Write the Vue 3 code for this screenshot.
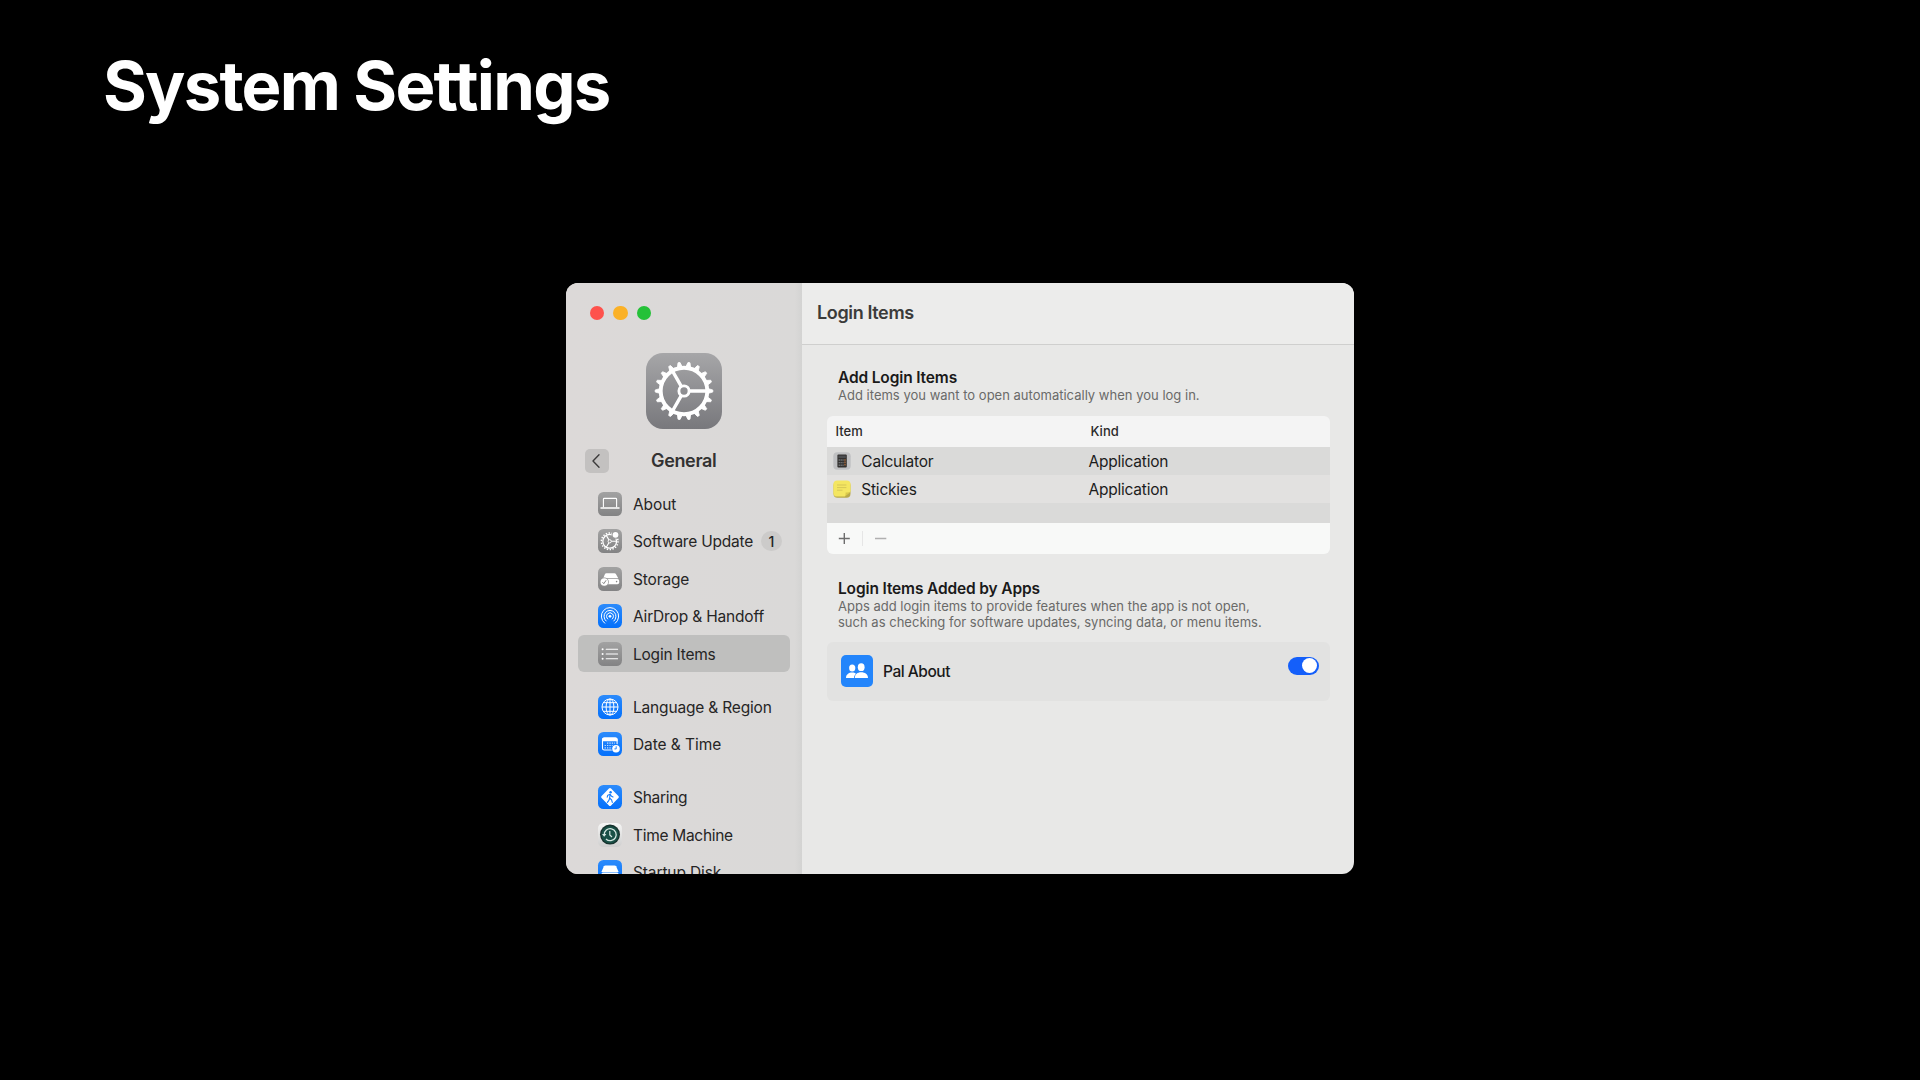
<script setup>
const groups = [
  [
    { label: 'About', icon: 'about', tone: 'gray', track: -0.1 },
    { label: 'Software Update', icon: 'update', tone: 'gray', badge: 1, track: -0.21 },
    { label: 'Storage', icon: 'storage', tone: 'gray', track: -0.15 },
    { label: 'AirDrop & Handoff', icon: 'airdrop', tone: 'blue', track: -0.17 },
    { label: 'Login Items', icon: 'list', tone: 'gray', active: true, track: -0.22 },
  ],
  [
    { label: 'Language & Region', icon: 'globe', tone: 'blue', track: -0.18 },
    { label: 'Date & Time', icon: 'date', tone: 'blue', track: -0.07 },
  ],
  [
    { label: 'Sharing', icon: 'sharing', tone: 'blue', track: -0.28 },
    { label: 'Time Machine', icon: 'machine', tone: 'white', track: -0.3 },
    { label: 'Startup Disk', icon: 'disk', tone: 'blue', track: -0.12 },
  ],
]
const rows = [
  { name: 'Calculator', kind: 'Application', icon: 'calc' },
  { name: 'Stickies', kind: 'Application', icon: 'note' },
]
const teeth = Array.from({ length: 18 }, (_, i) => i * 20)
</script>

<template>
  <main class="stage">
    <h1 class="title">System Settings</h1>

    <section class="window">
      <aside class="sidebar">
        <div class="lights">
          <i class="light red"></i><i class="light amber"></i><i class="light green"></i>
        </div>
        <div class="hero">
          <svg viewBox="0 0 76 76" width="76" height="76">
            <g fill="none" stroke="#fff" transform="translate(38 38)">
              <circle r="23.3" stroke-width="3.9" />
              <circle r="5.1" stroke-width="2.9" />
              <path d="M6 0H23M-3 -5.2L-11.5 -20M-3 5.2L-11.5 20" stroke-width="3.4" />
              <path v-for="a in teeth" :key="a" d="M24.5 -2.3L28.8 -1V1L24.5 2.3Z" fill="#fff" stroke-width=".8" stroke-linejoin="round" :transform="`rotate(${a})`" />
            </g>
          </svg>
        </div>
        <div class="nav-head">
          <button class="back">
            <svg viewBox="0 0 24 24" width="24" height="24"><path d="M14 5.8L8 12L14 18.2" fill="none" stroke="#3c3b3b" stroke-width="1.4" stroke-linecap="round" stroke-linejoin="round" /></svg>
          </button>
          <span>General</span>
        </div>

        <nav class="nav">
          <ul v-for="(group, g) in groups" :key="g" class="group">
            <li v-for="item in group" :key="item.label" class="item" :class="{ active: item.active }">
              <span class="icon" :class="item.tone">
                <svg viewBox="0 0 24 24" width="24" height="24">
                  <g v-if="item.icon === 'about'" fill="none" stroke="#fff">
                    <path d="M5.4 15.2V7.3Q5.4 6.4 6.3 6.4H17.7Q18.6 6.4 18.6 7.3V15.2" stroke-width="1.1" />
                    <path d="M3 16H21" stroke-width="1.5" stroke-linecap="round" />
                  </g>
                  <g v-else-if="item.icon === 'update'" fill="none" stroke="#fff">
                    <circle cx="11.7" cy="12.3" r="6.9" stroke-width="1.3" />
                    <circle cx="11.7" cy="12.3" r="8.3" stroke-width="1.5" stroke-dasharray="1.45 1.45" />
                    <circle cx="11.7" cy="12.3" r="1.6" stroke-width="1" />
                    <path d="M13.3 12.3H18.5M10.9 10.9L8.3 6.4M10.9 13.7L8.3 18.2" stroke-width="1.1" />
                    <circle cx="17.3" cy="6" r="3.7" fill="#999" stroke="none" />
                    <circle cx="17.5" cy="5.8" r="2.9" fill="#fff" stroke="none" />
                  </g>
                  <g v-else-if="item.icon === 'storage'">
                    <path d="M8.3 6.2H16.5Q17.4 6.2 17.9 7L20.3 11.3H5.2L7 7Q7.4 6.2 8.3 6.2Z" fill="#fff" />
                    <rect x="4.6" y="11.9" width="16.6" height="5.3" rx="1.8" fill="#fff" />
                    <circle cx="18.6" cy="14.6" r=".8" fill="#888" />
                    <circle cx="6.3" cy="15" r="4.5" fill="#929292" />
                    <circle cx="6.3" cy="15" r="3.8" fill="#fff" />
                    <path d="M4.5 15.2L5.8 16.7L8.1 13.3" fill="none" stroke="#888" stroke-width="1" />
                  </g>
                  <g v-else-if="item.icon === 'airdrop'" fill="none" stroke="#fff" stroke-width="1" stroke-linecap="round">
                    <circle cx="12" cy="12.3" r="1.4" fill="#fff" stroke="none" />
                    <path d="M9.7 15A3.5 3.5 0 1 1 14.3 15" />
                    <path d="M8.1 17A6 6 0 1 1 15.9 17" />
                    <path d="M6.7 19.2A8.7 8.7 0 1 1 17.3 19.2" />
                  </g>
                  <g v-else-if="item.icon === 'list'" fill="none" stroke="#fff" stroke-linecap="round">
                    <path d="M8.2 7.2H19.6M8.2 12H19.6M8.2 16.8H19.6" stroke-width="1.1" />
                    <path d="M4.6 7.2H4.61M4.6 12H4.61M4.6 16.8H4.61" stroke-width="2" />
                  </g>
                  <g v-else-if="item.icon === 'globe'" fill="none" stroke="#fff" stroke-width="1">
                    <circle cx="12" cy="12" r="8" />
                    <ellipse cx="12" cy="12" rx="3.9" ry="8" />
                    <path d="M12 4V20M4 12H20M5.4 7.7H18.6M5.4 16.3H18.6" />
                  </g>
                  <g v-else-if="item.icon === 'date'">
                    <rect x="4.5" y="6" width="14.6" height="12" rx="1.8" fill="none" stroke="#fff" stroke-width="1.1" />
                    <path d="M4 9.2V7.4Q4 5.5 6 5.5H17.6Q19.6 5.5 19.6 7.4V9.2Z" fill="#fff" />
                    <path d="M9 11.2H17M6.6 13.5H17M6.6 15.8H14" stroke="#fff" stroke-opacity=".75" stroke-width="1.2" stroke-dasharray="1.3 1.1" />
                    <circle cx="18" cy="16.7" r="4.6" fill="#137bfb" />
                    <circle cx="18" cy="16.7" r="3.8" fill="#fff" />
                    <path d="M18.2 14.3V16.9H16.4" fill="none" stroke="#137bfb" stroke-width=".9" />
                  </g>
                  <g v-else-if="item.icon === 'sharing'">
                    <rect x="5.3" y="5.3" width="13.4" height="13.4" rx="1.5" fill="#fff" transform="rotate(45 12 12)" />
                    <circle cx="12.6" cy="7.2" r="1.2" fill="#147cfc" />
                    <path d="M12.2 9.2L11.6 13L13.6 14.8L14.3 17.4M11.5 13.4L10.9 15.4L9.4 17.3M9.2 12.2L9.8 10.2L12.2 9.3L13.5 11.2L15 11.9" fill="none" stroke="#147cfc" stroke-width="1.1" stroke-linecap="round" stroke-linejoin="round" />
                  </g>
                  <g v-else-if="item.icon === 'machine'">
                    <circle cx="12" cy="11.6" r="10" fill="#17332e" />
                    <circle cx="12" cy="11.6" r="8.6" fill="#195046" />
                    <path d="M6.2 12A6 6 0 1 1 8 16" fill="none" stroke="#d5e6e1" stroke-width="1.3" />
                    <path d="M4 11L8.4 11L6.2 13.8Z" fill="#d5e6e1" />
                    <path d="M11.8 8V12L14 14" fill="none" stroke="#d5e6e1" stroke-width="1.2" />
                  </g>
                  <g v-else>
                    <path d="M7.4 5.4H16.6Q17.6 5.4 18.1 6.3L20.6 12H3.4L5.9 6.3Q6.4 5.4 7.4 5.4Z" fill="#fff" />
                    <rect x="3.4" y="12.6" width="17.2" height="5.4" rx="1.8" fill="#fff" />
                  </g>
                </svg>
              </span>
              <span class="label" :style="{ letterSpacing: item.track + 'px' }">{{ item.label }}</span>
              <span v-if="item.badge" class="badge">{{ item.badge }}</span>
            </li>
          </ul>
        </nav>
      </aside>

      <div class="content">
        <header class="bar">Login Items</header>

        <div class="body">
          <h2 class="heading">Add Login Items</h2>
          <p class="note">Add items you want to open automatically when you log in.</p>

          <div class="table">
            <div class="thead"><span class="c1">Item</span><span>Kind</span></div>
            <div v-for="row in rows" :key="row.name" class="row">
              <svg class="app" viewBox="0 0 18 18" width="18" height="18">
                <g v-if="row.icon === 'calc'">
                  <rect x=".3" y=".3" width="17.4" height="17.4" rx="4" fill="#bfc0c2" />
                  <rect x="4.4" y="2.6" width="9.4" height="13" rx="1" fill="#33312f" />
                  <rect x="5.4" y="3.6" width="7.4" height="2.4" fill="#4b4d50" />
                  <path d="M5.6 8H10.6M5.6 10.6H10.6M5.6 13.2H10.6" stroke="#6d7073" stroke-width="1.4" stroke-dasharray="1.4 .5" />
                  <path d="M12 7.2V14" stroke="#a5693a" stroke-width="1.4" stroke-dasharray="1.6 .8" />
                </g>
                <g v-else>
                  <rect x=".5" y="1.6" width="17" height="16.2" rx="4" fill="#b9a94a" />
                  <path d="M4.3 .4H13.7Q17.6 .4 17.6 4.3V11.4L11.8 16.6H4.3Q.4 16.6 .4 12.7V4.3Q.4 .4 4.3 .4Z" fill="#f4e661" />
                  <path d="M17.6 11.4L11.8 16.6Q13 13.6 12.6 12.4Q15.6 13 17.6 11.4Z" fill="#d9c84a" />
                  <path d="M4 5H13.4M4 7.6H13.4M4 10.2H9.5" stroke="#d3c356" stroke-width=".9" />
                </g>
              </svg>
              <span class="c1">{{ row.name }}</span><span>{{ row.kind }}</span>
            </div>
            <div class="row filler"></div>
            <div class="tfoot">
              <svg viewBox="0 0 64 31" width="64" height="31" fill="none">
                <path d="M11.8 15.5H22.8M17.3 10V21" stroke="#6d6d6d" stroke-width="1.4" />
                <path d="M35.5 8V23" stroke="#e6e6e6" stroke-width="1" />
                <path d="M48 15.5H59.3" stroke="#b0b0b0" stroke-width="1.4" />
              </svg>
            </div>
          </div>

          <h2 class="heading second">Login Items Added by Apps</h2>
          <p class="note">Apps add login items to provide features when the app is not open,<br />such as checking for software updates, syncing data, or menu items.</p>

          <div class="card">
            <svg class="pal" viewBox="0 0 32 32" width="32" height="32">
              <rect width="32" height="32" rx="5" fill="#2385fb" />
              <g fill="#fff">
                <ellipse cx="11.2" cy="13" rx="3.1" ry="3.5" />
                <path d="M5 23C5 19.6 7.8 17.6 11.2 17.6C12.8 17.6 14 18 15 18.7C13.7 19.8 13 21.3 13 23Z" />
                <ellipse cx="20.2" cy="12.2" rx="3.4" ry="3.9" />
                <path d="M13.8 23C13.8 19.4 16.4 17.3 20.2 17.3C24 17.3 27 19.4 27 23Z" />
              </g>
            </svg>
            <span>Pal About</span>
            <span class="toggle"><i></i></span>
          </div>
        </div>
      </div>
    </section>
  </main>
</template>

<style>
html, body { margin: 0; background: #000; }
</style>

<style scoped>
* { box-sizing: border-box; }
.stage { width: 1920px; height: 1080px; background: #000; overflow: hidden; font-family: Inter, "Liberation Sans", sans-serif; color: #2b2a2a; white-space: nowrap; }
h1, h2, p, ul { margin: 0; padding: 0; list-style: none; }
svg { display: block; }
.title { height: 283px; padding: 46px 0 0 103px; font-size: 67px; line-height: 80px; font-weight: 650; letter-spacing: -1.75px; color: #fff; }
.window { display: flex; width: 787.5px; height: 590.5px; margin-left: 566px; border-radius: 12px; overflow: hidden; background: #e8e8e7; }
.sidebar { flex: none; display: flex; flex-direction: column; width: 236px; background: linear-gradient(90deg, #dcd9d8, #dad9d8 97%, #d3d3d2); overflow: hidden; }
.lights { display: flex; gap: 9px; padding: 22.8px 0 0 23.7px; }
.light { width: 14.5px; height: 14.5px; border-radius: 50%; }
.red { background: #fe524c; }
.amber { background: #fbb126; }
.green { background: #25c138; }
.hero { flex: none; width: 76px; height: 76px; margin: 32.4px 0 0 80px; border-radius: 17px; background: linear-gradient(#a6a6a8, #78787c); }
.nav-head { display: flex; align-items: center; height: 24px; margin: 20.3px 0 0 19px; font-size: 18px; font-weight: 600; letter-spacing: -.35px; color: #333232; }
.back { width: 24px; height: 24px; margin-right: 42px; padding: 0; border: 0; border-radius: 5px; background: #c3c1c0; }
.nav { padding: 11.9px 12px 0; }
.group { margin-bottom: 15.5px; }
.item { display: flex; align-items: center; height: 37.5px; padding-left: 20px; border-radius: 6px; font-size: 15.5px; color: #262525; }
.label { padding-top: 1px; }
.active { background: #bfbfbe; }
.icon { flex: none; width: 24px; height: 24px; margin-right: 11px; border-radius: 5.5px; overflow: hidden; }
.gray { background: linear-gradient(#a2a2a2, #838384); }
.blue { background: linear-gradient(#2c8bfb, #0470fb); }
.white { background: linear-gradient(#f6f6f5, #cfcfcf); }
.badge { width: 20.5px; height: 20.5px; margin-left: 8px; border-radius: 50%; background: #cccbca; text-align: center; font-size: 14px; line-height: 21px; font-weight: 500; }
.content { flex: 1; display: flex; flex-direction: column; }
.bar { height: 61.5px; padding-left: 15px; border-bottom: 1px solid #cfcfce; background: #ececeb; font-size: 18px; line-height: 60px; font-weight: 600; letter-spacing: -.37px; color: #3b3b3a; }
.body { padding: 23px 24px 0 25px; }
.heading { padding-left: 11px; font-size: 15.5px; line-height: 19px; font-weight: 600; letter-spacing: -.14px; color: #1a1a1a; }
.note { padding-left: 11px; font-size: 13px; line-height: 16.5px; font-weight: 400; letter-spacing: .01px; color: #6a6a69; }
.table { margin-top: 12.5px; border-radius: 6px; overflow: hidden; }
.thead { display: flex; height: 31.5px; padding-left: 8.5px; background: #f4f4f4; font-size: 13px; line-height: 31px; font-weight: 500; }
.thead .c1 { width: 255px; }
.row { display: flex; align-items: center; height: 28px; padding-left: 6.3px; background: #dadad9; font-size: 15.5px; letter-spacing: -.22px; color: #1c1c1c; }
.row:nth-child(odd) { background: #e2e1e0; }
.row span { padding-top: 1px; }
.row .c1 { width: 227.2px; }
.app { margin-right: 10px; }
.filler { height: 19.5px; background: #dadad9 !important; }
.tfoot { height: 31px; background: #f8f9f8; }
.second { margin-top: 25px; }
.card { display: flex; align-items: center; height: 59px; margin-top: 11px; padding-left: 14px; border-radius: 6px; background: #e2e2e1; font-size: 15.5px; font-weight: 500; letter-spacing: -.47px; color: #1a1a1a; }
.pal { margin-right: 10px; }
.toggle { width: 31px; height: 18px; margin: 0 11px 11px auto; padding: 1.2px; border-radius: 9px; background: #145ffa; }
.toggle i { display: block; width: 15.6px; height: 15.6px; margin-left: auto; border-radius: 50%; background: #fff; }
</style>
